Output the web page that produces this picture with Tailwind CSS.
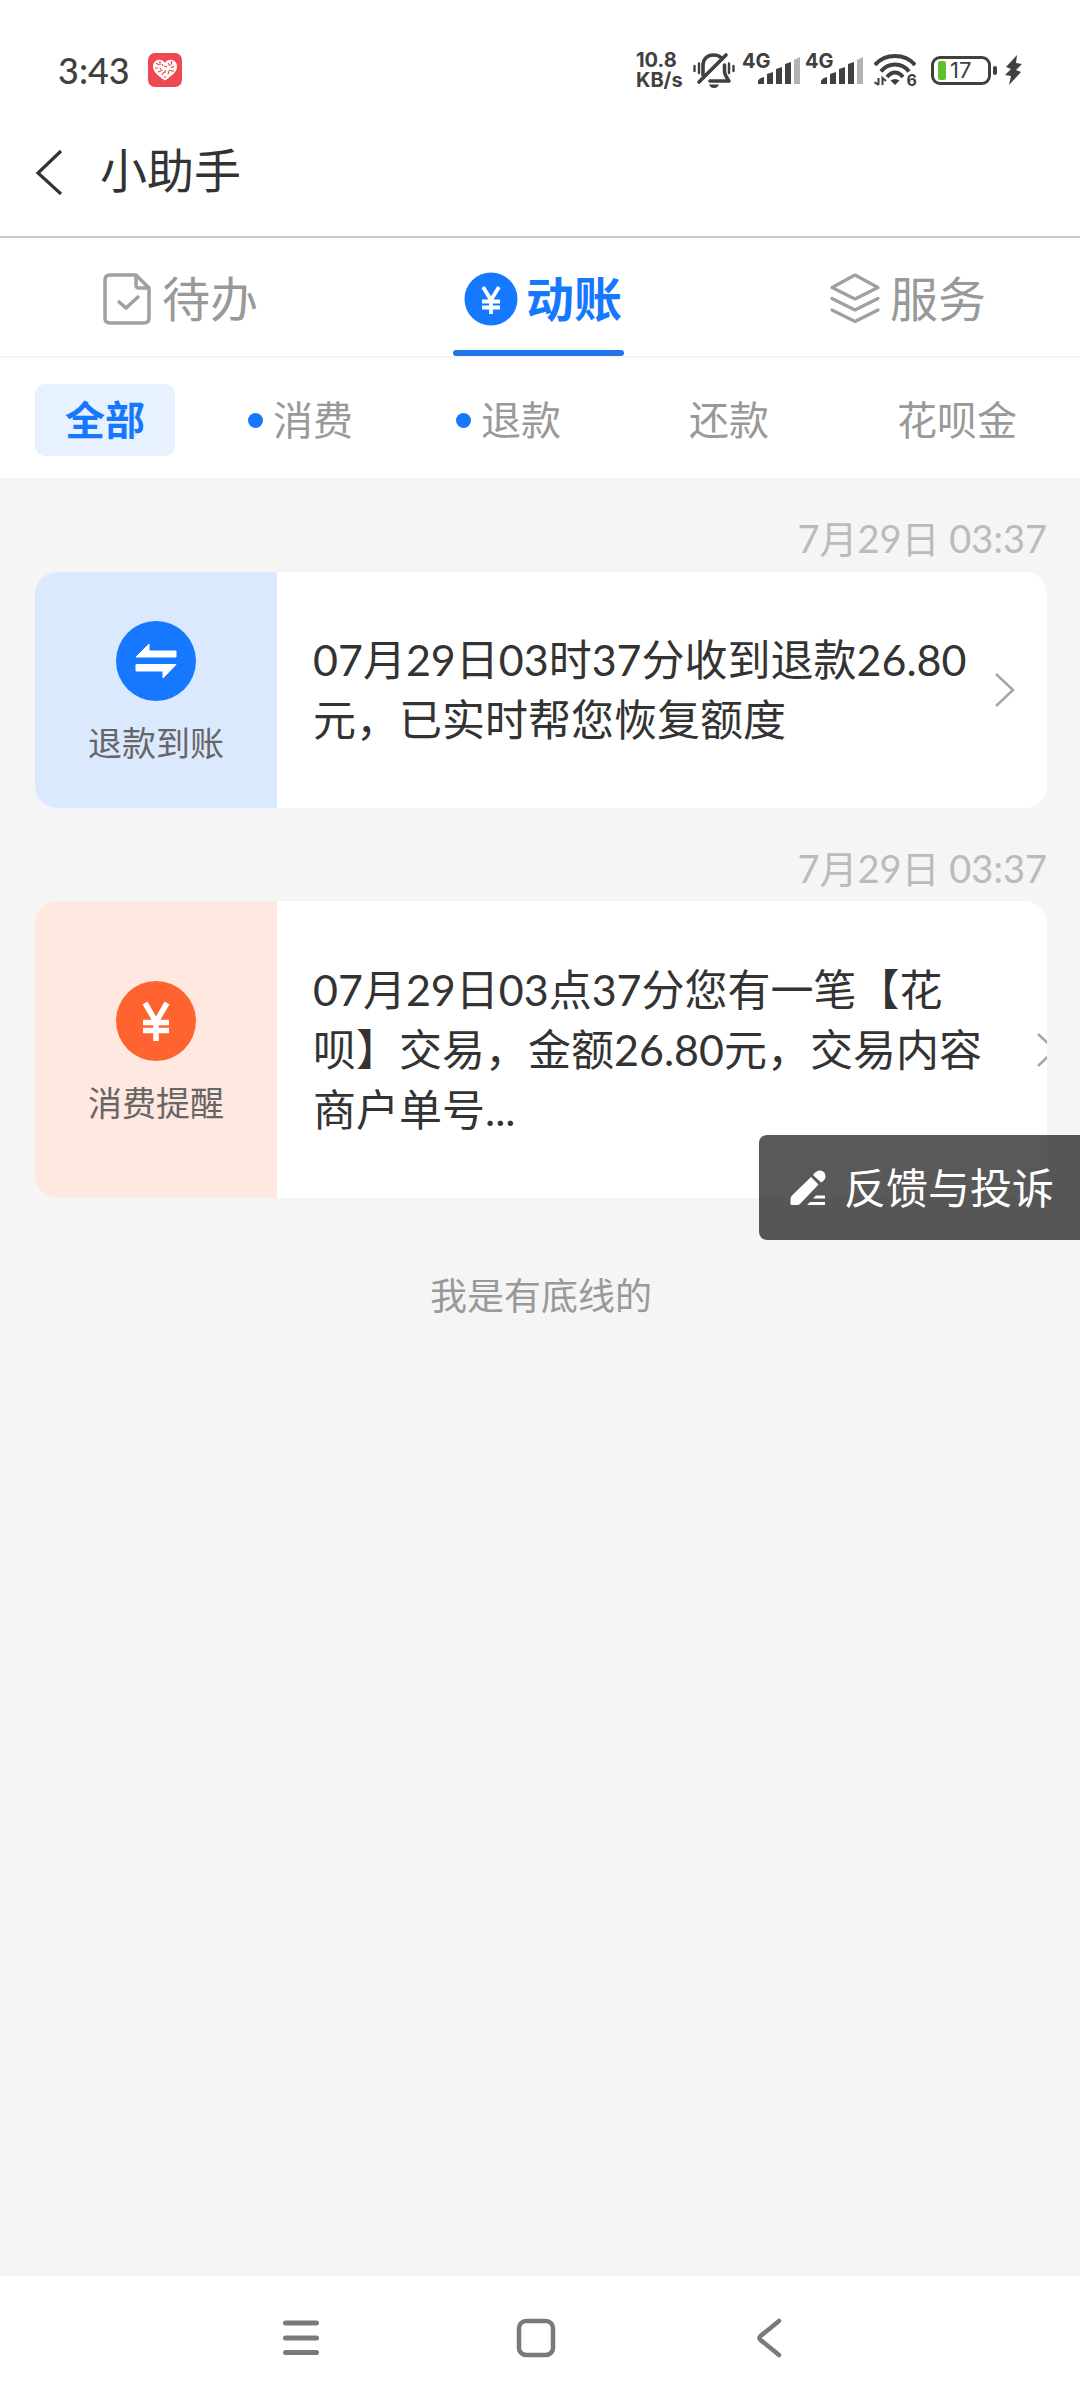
<!DOCTYPE html>
<html lang="zh-CN">
<head>
    <meta charset="UTF-8">
    <meta name="viewport" content="width=device-width, initial-scale=1.0">
    <title>小助手</title>
    <script src="https://cdn.jsdelivr.net/npm/@tailwindcss/browser@4"></script>
</head>
<body class="bg-[#f5f5f5] min-h-screen flex flex-col overflow-x-hidden text-[#333] font-[Lato,'Noto_Sans_CJK_SC',sans-serif]">

<!-- Status bar -->
<div class="bg-white h-[104px] pt-9 pl-[58px] pr-[58px] flex items-center justify-between text-[#404040]">
    <div class="flex items-center gap-[18px]">
        <span class="text-[36px] leading-[40px] font-medium">3:43</span>
        <svg class="size-[34px]" viewBox="0 0 34 34">
            <rect width="34" height="34" rx="7" fill="#ee4850"/>
            <path d="M17 27.500C12 24 5 19.500 5 13.500C5 6 14 4.500 17 10C20 4.500 29 6 29 13.500C29 19.500 22 24 17 27.500Z" fill="#fff"/>
            <path d="M8 10l3 2M12 8v4M7 15h3M12 15l2 3M10 19l3-1M14 22l2-3M16 13l3 1M17 17v3M20 10l2 3M24 8l-1 4M26 13l-3 2M21 17l3 1M20 21l1-3M25 17v2M17 23v2M14 11l1 2" stroke="#ee4850" stroke-width="1.200" fill="none"/>
        </svg>
    </div>
    <div class="flex items-center">
        <div class="w-[56px] flex flex-col text-[20px] leading-[20px] font-bold font-[Inter,sans-serif]">
            <span>10.8</span>
            <span>KB/s</span>
        </div>
        <svg class="w-[44px] h-[38px]" viewBox="0 0 44 38" fill="none" stroke="#404040" stroke-width="3.600" stroke-linecap="round">
            <path d="M11 24V14.500C11 8 15.500 4 21.500 4C25.500 4 28.500 5.500 30 8"/>
            <path d="M32.500 14V20C32.500 24 35 27 37 30H18" stroke-linejoin="round"/>
            <path d="M34 4L7 31"/>
            <path d="M17 33.500H27C26 36 24.500 37 22 37S18 36 17 33.500Z" fill="#404040" stroke="none"/>
            <path d="M2.500 15V20M7 12.500V22M37 12.500V22M41.500 15V20" stroke-width="2.400"/>
        </svg>
        <div class="relative w-[63px] h-[38px] pl-[22px] pt-[6px]">
            <span class="absolute left-[6px] top-0 text-[20px] leading-[20px] font-bold font-[Inter,sans-serif]">4G</span>
            <svg class="w-[42px] h-[27px]" viewBox="0 0 42 27" fill="#404040">
                <path d="M0 27V24Q1 21 6 20V27ZM9 27V17L15 15V27ZM18 27V12L24 10V27ZM27 27V7L33 5V27Z"/>
                <path d="M36 27V3L42 0V27Z" fill="#b3b3b3"/>
            </svg>
        </div>
        <div class="relative w-[63px] h-[38px] pl-[22px] pt-[6px]">
            <span class="absolute left-[6px] top-0 text-[20px] leading-[20px] font-bold font-[Inter,sans-serif]">4G</span>
            <svg class="w-[42px] h-[27px]" viewBox="0 0 42 27" fill="#404040">
                <path d="M0 27V24Q1 21 6 20V27ZM9 27V17L15 15V27ZM18 27V12L24 10V27ZM27 27V7L33 5V27Z"/>
                <path d="M36 27V3L42 0V27Z" fill="#b3b3b3"/>
            </svg>
        </div>
        <div class="relative w-[55px] h-[34px] pl-[12px] mr-[14px]">
            <svg class="w-[42px] h-[34px]" viewBox="0 0 42 34" fill="none" stroke="#404040" stroke-width="4">
                <path d="M1 12C11 0 31 0 41 12M7 18.500C14 9 28 9 35 18.500M13 24C18 18 24 18 29 24"/>
                <path d="M21 32L16.500 27.500Q21 24.500 25.500 27.500Z" fill="#404040" stroke="none"/>
                <path d="M4.500 25V32M0.500 29L4.500 32M8.500 32V25L12 28" stroke-width="2"/>
            </svg>
            <span class="absolute right-0 bottom-0 text-[16px] leading-[14px] font-bold font-[Inter,sans-serif]">6</span>
        </div>
        <div class="flex items-center">
            <div class="w-[60px] h-[29px] border-[3px] border-[#404040] rounded-[9px] flex items-center gap-[4px] pl-[4px]">
                <span class="w-[8px] h-[19px] bg-[#5ec22e] rounded-[2px]"></span>
                <span class="text-[22px] leading-[22px] font-[Inter,sans-serif]">17</span>
            </div>
            <span class="w-[4px] h-[9px] ml-[2px] rounded-[2px] bg-[#404040]"></span>
            <svg class="w-[17px] h-[30px] ml-[8px]" viewBox="0 0 17 30" fill="#404040">
                <path d="M12 0L1 12L6 14L0 20L6 21L4 30L16 17L11 15L17 9L11 8Z"/>
            </svg>
        </div>
    </div>
</div>

<!-- Title -->
<header class="bg-white h-[134px] border-b-2 border-[#c8c8c8] pl-[35px] flex items-center">
    <button type="button" aria-label="返回" class="pt-1">
        <svg class="w-[28px] h-[46px]" viewBox="0 0 28 46" fill="none" stroke="#333" stroke-width="3.200">
            <path d="M26 2L3 24L26 45"/>
        </svg>
    </button>
    <h1 class="ml-[37px] text-[47px] leading-[60px]">小助手</h1>
</header>

<!-- Tabs -->
<nav class="bg-white h-[120px] border-b-2 border-[#f5f5f5] pl-[100px] pr-[94px] flex justify-between text-[48px] leading-[60px] text-[#999]">
    <button type="button" class="flex items-center gap-[8px] pt-1">
        <svg class="size-[54px]" viewBox="0 0 54 54" fill="none" stroke="#a0a0a0" stroke-width="3.500" stroke-linejoin="round">
            <path d="M36 3H10Q5 3 5 8V46Q5 51 10 51H44Q49 51 49 46V16Z"/>
            <path d="M36 3V13Q36 16 39 16H49"/>
            <path d="M18 29L26 36L39 24"/>
        </svg>
        待办
    </button>
    <button type="button" class="relative flex items-center gap-[8px] pt-1 font-bold text-[#1677ff]">
        <svg class="size-[54px]" viewBox="0 0 54 54">
            <circle cx="27" cy="27" r="26.500" fill="#1677ff"/>
            <path d="M19 15L27 28L35 15M27 28V42M18 29.500H36M18 35.500H36" fill="none" stroke="#fff" stroke-width="3.800"/>
        </svg>
        动账
        <span class="absolute -left-[11px] -right-[2px] bottom-0 h-[6px] rounded-full bg-[#1f74ea]"></span>
    </button>
    <button type="button" class="flex items-center gap-[8px] pt-1">
        <svg class="size-[54px]" viewBox="0 0 54 54" fill="none" stroke="#a0a0a0" stroke-width="3.200" stroke-linejoin="round" stroke-linecap="round">
            <path d="M27 3L50 15.500L27 27L4 15.500Z"/>
            <path d="M4 26.500L27 38L50 26.500M4 38L27 49.500L50 38"/>
        </svg>
        服务
    </button>
</nav>

<!-- Filters -->
<div class="bg-white h-[120px] pl-[35px] pt-1 flex items-center gap-[68px] text-[40px] leading-[72px] text-[#999] whitespace-nowrap">
    <button type="button" class="shrink-0 px-[30px] rounded-[10px] bg-[#e7f1ff] font-bold text-[#1677ff]">全部</button>
    <button type="button" class="shrink-0 relative px-[30px]">
        <span class="absolute left-[5px] top-[29px] size-[15px] rounded-full bg-[#1677ff]"></span>消费
    </button>
    <button type="button" class="shrink-0 relative px-[30px]">
        <span class="absolute left-[5px] top-[29px] size-[15px] rounded-full bg-[#1677ff]"></span>退款
    </button>
    <button type="button" class="shrink-0 px-[30px]">还款</button>
    <button type="button" class="shrink-0 px-[30px]">花呗金</button>
</div>

<!-- Messages -->
<main class="relative grow pl-[35px] pr-[33px]">
    <time class="block pt-[28px] pb-[2px] text-right text-[38px] leading-[64px] text-[#bbb]">7月29日 03:37</time>
    <a href="#" class="flex h-[236px] rounded-[22px] overflow-hidden bg-white">
        <div class="w-[242px] shrink-0 pt-2 bg-[#dbe9ff] flex flex-col items-center justify-center gap-[18px]">
            <svg class="size-[80px]" viewBox="0 0 80 80">
                <circle cx="40" cy="40" r="40" fill="#1677ff"/>
                <path d="M20 36L33 23V30H60V36ZM60 43.500L47 57V50H20V43.500Z" fill="#fff" stroke="#fff" stroke-linejoin="round"/>
            </svg>
            <span class="text-[34px] leading-[48px] text-[#666]">退款到账</span>
        </div>
        <p class="grow self-center pl-[36px] text-[43px] leading-[60px] whitespace-nowrap">07月29日03时37分收到退款26.80<br>元，已实时帮您恢复额度</p>
        <svg class="w-[20px] h-[34px] mr-[32px] shrink-0 self-center" viewBox="0 0 20 34" fill="none" stroke="#a6a6a6" stroke-width="2.500">
            <path d="M1 1L18 17L1 33"/>
        </svg>
    </a>

    <time class="block pt-[28px] pb-[1px] text-right text-[38px] leading-[64px] text-[#bbb]">7月29日 03:37</time>
    <a href="#" class="flex h-[297px] rounded-[22px] overflow-hidden bg-white">
        <div class="w-[242px] shrink-0 pt-2 bg-[#ffe8e0] flex flex-col items-center justify-center gap-[18px]">
            <svg class="size-[80px]" viewBox="0 0 80 80">
                <circle cx="40" cy="40" r="40" fill="#ff6430"/>
                <path d="M29 22L40 41L51 22M40 40V60M27 41.500H53M27 49.500H53" fill="none" stroke="#fff" stroke-width="5.500"/>
            </svg>
            <span class="text-[34px] leading-[48px] text-[#666]">消费提醒</span>
        </div>
        <p class="grow self-center pl-[36px] text-[43px] leading-[60px] whitespace-nowrap">07月29日03点37分您有一笔【花<br>呗】交易，金额26.80元，交易内容<br>商户单号...</p>
        <svg class="w-[20px] h-[34px] -mr-[10px] shrink-0 self-center" viewBox="0 0 20 34" fill="none" stroke="#a6a6a6" stroke-width="2.500">
            <path d="M1 1L18 17L1 33"/>
        </svg>
    </a>

    <p class="mt-[68px] text-center text-[37px] leading-[60px] text-[#999]">我是有底线的</p>

    <!-- Floating feedback button -->
    <button type="button" class="absolute right-0 top-[657px] h-[105px] pl-[31px] pr-[26px] flex items-center gap-[18px] rounded-l-[8px] bg-black/65 text-white text-[42px] leading-[60px]">
        <svg class="size-[36px]" viewBox="0 0 36 36" fill="#fff">
            <path d="M21 7L28.500 14.500L10 34Q9 35 7 35H2Q0.500 35 0.500 33.500V29Q0.500 27 2 25.500Z"/>
            <path d="M23 5Q26 0.500 30 0.500Q35 1 35.500 6Q35.500 10 31 12.500Z"/>
            <path d="M26 25.500H35V28.500H23ZM20 32H35V35H17Z"/>
        </svg>
        反馈与投诉
    </button>
</main>

<!-- System navigation -->
<footer class="bg-white h-[124px] pl-[281px] pr-[290px] flex items-center justify-between">
    <button type="button" aria-label="最近任务">
        <svg class="size-[40px]" viewBox="0 0 40 40" stroke="#7a7a7a" stroke-width="5" stroke-linecap="round">
            <path d="M4.500 5H35.500M4.500 20H35.500M4.500 34.500H35.500"/>
        </svg>
    </button>
    <button type="button" aria-label="主屏幕">
        <svg class="size-[40px]" viewBox="0 0 40 40" fill="none" stroke="#7a7a7a" stroke-width="4.500">
            <rect x="3" y="3" width="34" height="34" rx="7"/>
        </svg>
    </button>
    <button type="button" aria-label="返回上一页">
        <svg class="size-[40px]" viewBox="0 0 40 40" fill="none" stroke="#7a7a7a" stroke-width="4.500" stroke-linecap="round">
            <path d="M29 3L10.500 18Q8.500 20 10.500 22L29 37"/>
        </svg>
    </button>
</footer>
</body>
</html>
